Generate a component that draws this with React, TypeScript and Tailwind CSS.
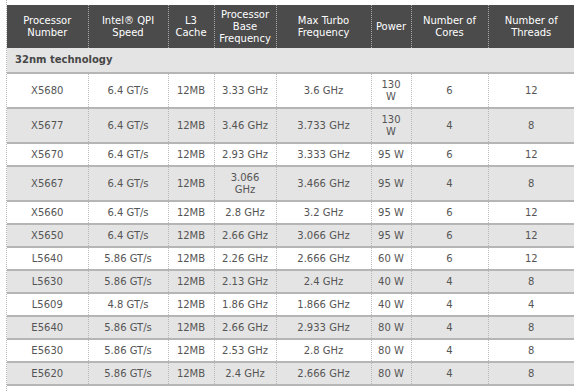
import React from "react";

type Row = {
  name: string;
  qpi: string;
  cache: string;
  base: React.ReactNode;
  turbo: string;
  power: React.ReactNode;
  cores: string;
  threads: string;
};

const rows: Row[] = [
  { name: "X5680", qpi: "6.4 GT/s", cache: "12MB", base: "3.33 GHz", turbo: "3.6 GHz", power: <>130<br />W</>, cores: "6", threads: "12" },
  { name: "X5677", qpi: "6.4 GT/s", cache: "12MB", base: "3.46 GHz", turbo: "3.733 GHz", power: <>130<br />W</>, cores: "4", threads: "8" },
  { name: "X5670", qpi: "6.4 GT/s", cache: "12MB", base: "2.93 GHz", turbo: "3.333 GHz", power: "95 W", cores: "6", threads: "12" },
  { name: "X5667", qpi: "6.4 GT/s", cache: "12MB", base: <>3.066<br />GHz</>, turbo: "3.466 GHz", power: "95 W", cores: "4", threads: "8" },
  { name: "X5660", qpi: "6.4 GT/s", cache: "12MB", base: "2.8 GHz", turbo: "3.2 GHz", power: "95 W", cores: "6", threads: "12" },
  { name: "X5650", qpi: "6.4 GT/s", cache: "12MB", base: "2.66 GHz", turbo: "3.066 GHz", power: "95 W", cores: "6", threads: "12" },
  { name: "L5640", qpi: "5.86 GT/s", cache: "12MB", base: "2.26 GHz", turbo: "2.666 GHz", power: "60 W", cores: "6", threads: "12" },
  { name: "L5630", qpi: "5.86 GT/s", cache: "12MB", base: "2.13 GHz", turbo: "2.4 GHz", power: "40 W", cores: "4", threads: "8" },
  { name: "L5609", qpi: "4.8 GT/s", cache: "12MB", base: "1.86 GHz", turbo: "1.866 GHz", power: "40 W", cores: "4", threads: "4" },
  { name: "E5640", qpi: "5.86 GT/s", cache: "12MB", base: "2.66 GHz", turbo: "2.933 GHz", power: "80 W", cores: "4", threads: "8" },
  { name: "E5630", qpi: "5.86 GT/s", cache: "12MB", base: "2.53 GHz", turbo: "2.8 GHz", power: "80 W", cores: "4", threads: "8" },
  { name: "E5620", qpi: "5.86 GT/s", cache: "12MB", base: "2.4 GHz", turbo: "2.666 GHz", power: "80 W", cores: "4", threads: "8" },
];

const widths = [81, 80, 46, 62, 95, 40, 77, 86];

const headers: React.ReactNode[] = [
  <>Processor<br />Number</>,
  <>Intel® QPI<br />Speed</>,
  <>L3<br />Cache</>,
  <>Processor<br />Base<br />Frequency</>,
  <>Max Turbo<br />Frequency</>,
  <>Power</>,
  <>Number of<br />Cores</>,
  <>Number of<br />Threads</>,
];

export default function App() {
  return (
    <div
      className="w-[578px] h-[391px] bg-white pl-[6px] overflow-hidden"
      style={{ fontFamily: '"DejaVu Sans", Verdana, sans-serif' }}
    >
      <div className="h-full border-l border-dotted border-[#b4b4b4] pt-[5px]">
        <table className="table-fixed border-collapse w-[567px] text-[10px] leading-[12px]">
          <colgroup>
            {widths.map((w, i) => (
              <col key={i} style={{ width: w }} />
            ))}
          </colgroup>
          <thead>
            <tr className="bg-[#4b4b4b] text-white h-[43px]">
              {headers.map((h, i) => (
                <th
                  key={i}
                  className={
                    "font-normal text-center align-middle px-[2px] py-[3px] " +
                    (i < 7 ? "border-r border-dotted border-r-[#a8a8a8]" : "")
                  }
                >
                  {h}
                </th>
              ))}
            </tr>
          </thead>
          <tbody>
            <tr className="bg-[#e4e4e4] border-b-2 border-[#b5b5b5]">
              <td colSpan={8} className="h-[25px] px-[8px] font-bold text-[#474747] align-middle">
                32nm technology
              </td>
            </tr>
            {rows.map((r, i) => {
              const cells = [r.name, r.qpi, r.cache, r.base, r.turbo, r.power, r.cores, r.threads];
              return (
                <tr
                  key={r.name}
                  className={(i % 2 === 1 ? "bg-[#e4e4e4]" : "bg-white") + " border-b-2 border-[#b5b5b5]"}
                >
                  {cells.map((c, j) => (
                    <td
                      key={j}
                      className={
                        "text-center align-middle whitespace-nowrap text-[#555555] px-[2px] pt-[5px] pb-[4px] " +
                        (j < 7 ? "border-r border-dotted border-r-[#b8b8b8]" : "")
                      }
                    >
                      {c}
                    </td>
                  ))}
                </tr>
              );
            })}
          </tbody>
        </table>
      </div>
    </div>
  );
}
